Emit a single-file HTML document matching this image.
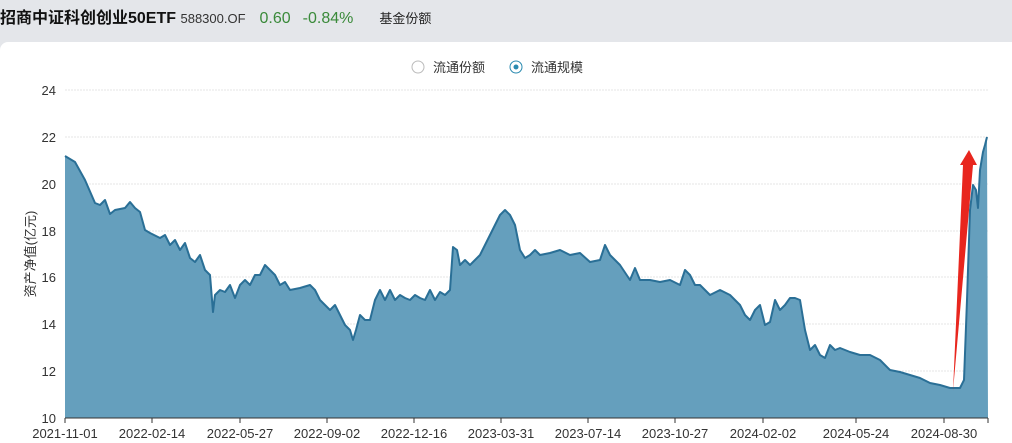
<!DOCTYPE html>
<html><head><meta charset="utf-8"><style>
body{margin:0;width:1012px;height:443px;background:#e4e6ea;font-family:"Liberation Sans","Noto Sans CJK SC",sans-serif;overflow:hidden;position:relative}
.hdr{position:absolute;left:0;top:6px;height:26px;line-height:26px;white-space:nowrap}
.card{position:absolute;left:0;top:42px;width:1012px;height:401px;background:#fff;border-radius:8px 0 0 0}
</style></head><body>
<div class="hdr"><span style="font-size:16px;font-weight:bold;color:#111;">招商中证科创创业50ETF</span> <span style="font-size:13px;color:#333">588300.OF</span><span style="font-size:16px;color:#3a8a3a;margin-left:14px">0.60</span><span style="font-size:16px;color:#3a8a3a;margin-left:12px">-0.84%</span><span style="font-size:13px;color:#222;margin-left:26px">基金份额</span></div>
<div class="card"></div>
<svg width="1012" height="443" style="position:absolute;left:0;top:0" font-family="Liberation Sans, Noto Sans CJK SC, sans-serif">
<defs><path id="d" d="M65,156 L75,162 85,180 95,203 100,205 105,200 110,214 115,210 125,208 130,202 135,208 140,212 145,230 150,233 160,238 165,235 170,245 175,240 180,250 185,243 190,258 195,262 200,255 205,270 210,275 213,312 215,295 220,290 225,292 230,285 235,298 240,285 245,280 250,285 255,275 260,275 265,265 270,270 275,275 280,285 285,282 290,290 300,288 310,285 315,290 320,300 325,305 330,310 335,305 340,315 345,325 350,330 353,340 356,330 360,315 365,320 370,320 375,300 380,290 385,300 390,290 395,300 400,295 405,298 410,300 415,295 420,298 425,300 430,290 435,300 440,292 445,295 450,290 453,247 457,250 460,265 465,260 470,265 475,260 480,255 485,245 490,235 495,225 500,215 505,210 510,215 515,225 520,250 525,258 530,255 535,250 540,255 550,253 560,250 570,255 580,253 590,262 600,260 605,245 610,255 620,265 630,280 635,268 640,280 650,280 660,282 670,280 680,285 685,270 690,275 695,285 700,285 710,295 720,290 730,295 740,305 745,315 750,320 755,310 760,305 765,325 770,322 775,300 780,310 785,305 790,298 795,298 800,300 805,330 810,350 815,345 820,355 825,358 830,345 835,350 840,348 845,350 850,352 860,355 870,355 880,360 890,370 900,372 910,375 920,378 930,383 940,385 950,388 960,388 964,380 967,300 970,210 973,185 976,190 978,208 980,170 983,152 985,145 987,137"/></defs>
<circle cx="418" cy="67" r="6" fill="none" stroke="#bbb"/>
<text x="433" y="72" font-size="13" fill="#333">流通份额</text>
<circle cx="516" cy="67" r="6" fill="none" stroke="#2a8ab0"/><circle cx="516" cy="67" r="2.5" fill="#2a8ab0"/>
<text x="531" y="72" font-size="13" fill="#333">流通规模</text>
<g stroke="#e6e6e6" stroke-dasharray="2,1">
<line x1="65" y1="90" x2="988" y2="90"/><line x1="65" y1="137" x2="988" y2="137"/><line x1="65" y1="184" x2="988" y2="184"/><line x1="65" y1="231" x2="988" y2="231"/><line x1="65" y1="277" x2="988" y2="277"/><line x1="65" y1="324" x2="988" y2="324"/><line x1="65" y1="371" x2="988" y2="371"/></g>
<g font-size="13" fill="#333" text-anchor="end">
<text x="56" y="95">24</text><text x="56" y="142">22</text><text x="56" y="189">20</text><text x="56" y="236">18</text><text x="56" y="282">16</text><text x="56" y="329">14</text><text x="56" y="376">12</text><text x="56" y="423">10</text></g>
<text transform="translate(35,254) rotate(-90)" font-size="13" fill="#333" text-anchor="middle">资产净值(亿元)</text>
<path fill="#659fbd" d="M65,156 L75,162 85,180 95,203 100,205 105,200 110,214 115,210 125,208 130,202 135,208 140,212 145,230 150,233 160,238 165,235 170,245 175,240 180,250 185,243 190,258 195,262 200,255 205,270 210,275 213,312 215,295 220,290 225,292 230,285 235,298 240,285 245,280 250,285 255,275 260,275 265,265 270,270 275,275 280,285 285,282 290,290 300,288 310,285 315,290 320,300 325,305 330,310 335,305 340,315 345,325 350,330 353,340 356,330 360,315 365,320 370,320 375,300 380,290 385,300 390,290 395,300 400,295 405,298 410,300 415,295 420,298 425,300 430,290 435,300 440,292 445,295 450,290 453,247 457,250 460,265 465,260 470,265 475,260 480,255 485,245 490,235 495,225 500,215 505,210 510,215 515,225 520,250 525,258 530,255 535,250 540,255 550,253 560,250 570,255 580,253 590,262 600,260 605,245 610,255 620,265 630,280 635,268 640,280 650,280 660,282 670,280 680,285 685,270 690,275 695,285 700,285 710,295 720,290 730,295 740,305 745,315 750,320 755,310 760,305 765,325 770,322 775,300 780,310 785,305 790,298 795,298 800,300 805,330 810,350 815,345 820,355 825,358 830,345 835,350 840,348 845,350 850,352 860,355 870,355 880,360 890,370 900,372 910,375 920,378 930,383 940,385 950,388 960,388 964,380 967,300 970,210 973,185 976,190 978,208 980,170 983,152 985,145 987,137 L988,418 L65,418 Z"/>
<use href="#d" fill="none" stroke="#2a6f96" stroke-width="2" stroke-linejoin="round"/>
<line x1="65" y1="418" x2="988" y2="418" stroke="#333"/>
<g stroke="#333"><line x1="65" y1="418" x2="65" y2="423"/><line x1="152" y1="418" x2="152" y2="423"/><line x1="240" y1="418" x2="240" y2="423"/><line x1="327" y1="418" x2="327" y2="423"/><line x1="414" y1="418" x2="414" y2="423"/><line x1="501" y1="418" x2="501" y2="423"/><line x1="588" y1="418" x2="588" y2="423"/><line x1="675" y1="418" x2="675" y2="423"/><line x1="763" y1="418" x2="763" y2="423"/><line x1="856" y1="418" x2="856" y2="423"/><line x1="944" y1="418" x2="944" y2="423"/><line x1="988" y1="418" x2="988" y2="423"/></g>
<g font-size="13" fill="#333" text-anchor="middle">
<text x="65" y="438">2021-11-01</text><text x="152" y="438">2022-02-14</text><text x="240" y="438">2022-05-27</text><text x="327" y="438">2022-09-02</text><text x="414" y="438">2022-12-16</text><text x="501" y="438">2023-03-31</text><text x="588" y="438">2023-07-14</text><text x="675" y="438">2023-10-27</text><text x="763" y="438">2024-02-02</text><text x="856" y="438">2024-05-24</text><text x="944" y="438">2024-08-30</text></g>
<path fill="#e8261e" d="M953,391 L963,165 L960,165 L969,150 L977,165 L973,165 Z"/>
</svg>
</body></html>
